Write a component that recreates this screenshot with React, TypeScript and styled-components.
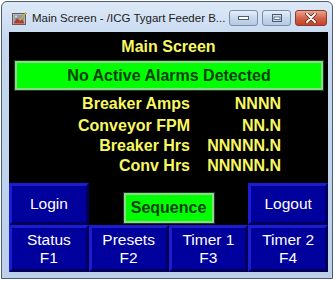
import {FC, Fragment} from 'react'
import styled, {createGlobalStyle} from 'styled-components'

const GlobalStyle = createGlobalStyle`
  html, body {
    margin: 0;
    padding: 0;
    background: #ffffff;
  }
  * {
    box-sizing: border-box;
  }
`

const Window = styled.div`
  margin: 1px 0 0 1px;
  width: 332px;
  height: 278px;
  border: 1px solid #4c5d73;
  border-radius: 6px 6px 0 0;
  background: linear-gradient(#dde9f7, #c4d7ef 40px, #bcd0ea);
  padding: 0 4px 6px 7px;
  display: flex;
  flex-direction: column;
`

const TitleBar = styled.div`
  height: 31px;
  display: flex;
  align-items: center;
  padding: 2px 0 0 3px;
`

const TitleText = styled.span`
  flex: 1;
  margin-left: 5px;
  font-family: 'Liberation Sans', Arial, sans-serif;
  font-size: 11.5px;
  color: #1b1b1b;
  white-space: nowrap;
`

const Caption = styled.div`
  display: flex;
  gap: 4px;
  margin-right: 1px;
`

const CaptionButton = styled.div<{$close?: boolean}>`
  width: ${(p) => (p.$close ? 32 : 29)}px;
  height: 16px;
  border: 1px solid ${(p) => (p.$close ? '#8d3a2a' : '#7b8da6')};
  border-radius: 3px;
  background: ${(p) =>
    p.$close
      ? 'linear-gradient(#e9a691, #d4654a 50%, #c2402a)'
      : 'linear-gradient(#e6eef8, #c8d8ec 50%, #b5c9e2)'};
  display: flex;
  align-items: center;
  justify-content: center;
`

const Client = styled.div`
  width: 319px;
  height: 240px;
  background: #000000;
  display: flex;
  flex-direction: column;
  font-family: 'Liberation Sans', Arial, sans-serif;
`

const Header = styled.div`
  padding-top: 5px;
  line-height: 20px;
  text-align: center;
  font-size: 16px;
  font-weight: bold;
  color: #f8f860;
`

const GreenPanel = styled.div`
  background: #00ff00;
  border: 2px solid #8ed88e;
  box-shadow: 0 0 0 1px #1d3d1d;
  color: #0b3f0b;
  font-size: 16px;
  font-weight: bold;
  display: flex;
  align-items: center;
  justify-content: center;
`

const AlarmBanner = styled(GreenPanel)`
  margin: 4px 5px 0 6px;
  height: 29px;
`

const Readings = styled.div`
  margin-top: 4px;
  display: grid;
  grid-template-columns: 181px 91px;
  grid-template-rows: 22px 20px 20px 20px;
  font-size: 16px;
  font-weight: bold;
  line-height: 20px;
  color: #f8f860;
`

const Label = styled.div`
  text-align: right;
`

const Value = styled.div`
  text-align: right;
`

const Keys = styled.div`
  margin-top: 7px;
  display: grid;
  grid-template-columns: repeat(4, 1fr);
  grid-template-rows: 42px 47px;
`

const Key = styled.div<{$col: number}>`
  grid-column: ${(p) => p.$col};
  background: #00009c;
  border: 3px solid;
  border-color: #1c1cd0 #000058 #000058 #1c1cd0;
  color: #ffffff;
  font-size: 15.5px;
  line-height: 18px;
  display: flex;
  flex-direction: column;
  align-items: center;
  justify-content: center;
  text-align: center;
`

const SequenceSlot = styled.div`
  grid-column: 2 / span 2;
  display: flex;
  align-items: flex-end;
  justify-content: center;
  padding-bottom: 2px;
`

const SequenceButton = styled(GreenPanel)`
  width: 90px;
  height: 30px;
`

const AppIcon: FC = () => (
  <svg width="15" height="15" viewBox="0 0 15 15">
    <rect x="0.5" y="2.5" width="13" height="11" fill="#d9d2c8" stroke="#6b5a4a" />
    <rect x="1.5" y="3.5" width="11" height="9" fill="#8a9cb8" />
    <path d="M1.5 12.5 L5 7 L8 10 L10 8 L12.5 12.5 Z" fill="#b8382a" />
    <path d="M7 9 L13.5 1.5 L14.5 2.5 L8 10 Z" fill="#e8d040" stroke="#7a6a20" strokeWidth="0.5" />
    <circle cx="4" cy="5.5" r="1" fill="#f4e9a0" />
  </svg>
)

const readings = [
  {label: 'Breaker Amps', value: 'NNNN'},
  {label: 'Conveyor FPM', value: 'NN.N'},
  {label: 'Breaker Hrs', value: 'NNNNN.N'},
  {label: 'Conv Hrs', value: 'NNNNN.N'},
]

const functionKeys = [
  {name: 'Status', key: 'F1'},
  {name: 'Presets', key: 'F2'},
  {name: 'Timer 1', key: 'F3'},
  {name: 'Timer 2', key: 'F4'},
]

const App: FC = () => (
  <>
    <GlobalStyle />
    <Window>
      <TitleBar>
        <AppIcon />
        <TitleText>Main Screen - /ICG Tygart Feeder B...</TitleText>
        <Caption>
          <CaptionButton>
            <svg width="11" height="4" viewBox="0 0 11 4">
              <rect x="0.5" y="0.5" width="10" height="3" fill="#ffffff" stroke="#4a5d78" />
            </svg>
          </CaptionButton>
          <CaptionButton>
            <svg width="10" height="8" viewBox="0 0 10 8">
              <rect x="0.5" y="0.5" width="9" height="7" fill="none" stroke="#4a5d78" />
              <rect x="2" y="3" width="6" height="2.5" fill="#ffffff" stroke="#4a5d78" strokeWidth="0.8" />
            </svg>
          </CaptionButton>
          <CaptionButton $close>
            <svg width="12" height="10" viewBox="0 0 12 10">
              <path d="M2 1 L10 9 M10 1 L2 9" stroke="#5a1a10" strokeWidth="3.4" strokeLinecap="round" />
              <path d="M2 1 L10 9 M10 1 L2 9" stroke="#ffffff" strokeWidth="2" strokeLinecap="round" />
            </svg>
          </CaptionButton>
        </Caption>
      </TitleBar>
      <Client>
        <Header>Main Screen</Header>
        <AlarmBanner>No Active Alarms Detected</AlarmBanner>
        <Readings>
          {readings.map((r) => (
            <Fragment key={r.label}>
              <Label>{r.label}</Label>
              <Value>{r.value}</Value>
            </Fragment>
          ))}
        </Readings>
        <Keys>
          <Key $col={1}>Login</Key>
          <SequenceSlot>
            <SequenceButton>Sequence</SequenceButton>
          </SequenceSlot>
          <Key $col={4}>Logout</Key>
          {functionKeys.map((f, i) => (
            <Key key={f.key} $col={i + 1}>
              <span>{f.name}</span>
              <span>{f.key}</span>
            </Key>
          ))}
        </Keys>
      </Client>
    </Window>
  </>
)

export default App
